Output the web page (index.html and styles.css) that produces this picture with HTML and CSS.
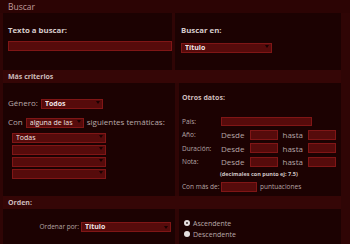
FILE: index.html
```html
<!DOCTYPE html>
<html lang="es">
<head>
    <meta charset="UTF-8">
    <title>Buscar</title>
    <link rel="stylesheet" href="styles.css">
</head>
<body>
<div class="page">

    <!-- Cabecera -->
    <div class="bar bar-top">Buscar</div>

    <div class="row row-first">
        <div class="panel panel-left">
            <label class="title">Texto a buscar:</label>
            <input type="text" class="field field-text">
        </div>
        <div class="panel panel-right">
            <label class="title">Buscar en:</label>
            <div class="sel sel-en"><select><option>Título</option></select></div>
        </div>
    </div>

    <div class="bar">Más criterios</div>

    <div class="row row-criterios">
        <div class="panel panel-left criterios">
            <div class="line">
                <span>Género:</span>
                <div class="sel sel-genero"><select><option>Todos</option></select></div>
            </div>
            <div class="line line-con">
                <span>Con</span>
                <div class="sel sel-con"><select><option>alguna de las</option></select></div>
                <span>siguientes temáticas:</span>
            </div>
            <div class="tematicas">
                <div class="sel sel-tema"><select><option>Todas</option></select></div>
                <div class="sel sel-tema"><select><option></option></select></div>
                <div class="sel sel-tema"><select><option></option></select></div>
                <div class="sel sel-tema"><select><option></option></select></div>
            </div>
        </div>
        <div class="panel panel-right otros">
            <div class="subtitle">Otros datos:</div>
            <div class="datos">
                <span>País:</span>
                <div class="cell"><input type="text" class="field field-pais"></div>
                <span>Año:</span>
                <div class="cell">Desde <input type="text" class="field field-num"> hasta <input type="text" class="field field-num"></div>
                <span>Duración:</span>
                <div class="cell">Desde <input type="text" class="field field-num"> hasta <input type="text" class="field field-num"></div>
                <span>Nota:</span>
                <div class="cell">Desde <input type="text" class="field field-num"> hasta <input type="text" class="field field-num"></div>
            </div>
            <div class="nota-info">(decimales con punto ej: 7.5)</div>
            <div class="votos">
                <span class="votos-label">Con más de:</span>
                <input type="text" class="field field-votos">
                <span>puntuaciones</span>
            </div>
        </div>
    </div>

    <div class="bar">Orden:</div>

    <div class="row row-orden">
        <div class="panel panel-left orden">
            <span>Ordenar por:</span>
            <div class="sel sel-orden"><select><option>Título</option></select></div>
        </div>
        <div class="panel panel-right sentido">
            <label class="radio"><input type="radio" name="orden" checked> Ascendente</label>
            <label class="radio"><input type="radio" name="orden"> Descendente</label>
        </div>
    </div>

</div>
</body>
</html>
```

FILE: styles.css
```css
/* Reset */
* {
    margin: 0;
    padding: 0;
    box-sizing: border-box;
}

body {
    font-family: "Open Sans", "DejaVu Sans", sans-serif;
    font-size: 8px;
    background-color: #2a0404;
    color: #c9b9b9;
    width: 350px;
    overflow: hidden;
}

/* Marco general */
.page {
    padding: 0 9px 0 3px;
    background-color: #2f0505;
}

/* Barras de seccion */
.bar {
    height: 13px;
    line-height: 13px;
    padding-left: 5px;
    font-weight: bold;
    font-size: 7px;
    color: #cdbcbc;
    background-color: #350606;
}

.bar-top {
    margin-left: -3px;
    margin-right: -9px;
    padding-left: 8px;
    font-weight: normal;
    font-size: 8.5px;
    color: #c09c9c;
    background-color: #2c0404;
}

.row {
    display: flex;
    gap: 4px;
}

.panel {
    background-color: #1c0202;
}

.panel-left {
    width: 172px;
}

.panel-right {
    flex: 1;
}

/* Primera fila */
.row-first {
    gap: 3px;
    height: 57px;
}

.row-first .panel-left {
    width: 169px;
    padding: 12px 0 0 5px;
}

.row-first .panel-right {
    padding: 12px 0 0 6px;
}

.title {
    display: block;
    font-weight: bold;
    font-size: 7.8px;
    line-height: 10px;
    margin-bottom: 4px;
    color: #d6caca;
}

/* Campos */
.field {
    display: inline-block;
    height: 10px;
    background-color: #560b0b;
    border: 1px solid #801616;
    color: #eee;
    font-size: 7px;
    outline: none;
    vertical-align: middle;
}

.field-text {
    width: 164px;
}

.sel {
    display: inline-block;
    position: relative;
    height: 10px;
    vertical-align: middle;
}

.sel select {
    appearance: none;
    -webkit-appearance: none;
    width: 100%;
    height: 10px;
    padding: 0 0 0 3px;
    background-color: #560b0b;
    border: 1px solid #801616;
    border-radius: 0;
    color: #f0e4e4;
    font-family: inherit;
    font-size: 7px;
    line-height: 8px;
    font-weight: bold;
}

.sel::after {
    content: "";
    position: absolute;
    right: 3px;
    top: 4px;
    border-left: 2px solid transparent;
    border-right: 2px solid transparent;
    border-top: 3px solid #1a0202;
}

.sel-en {
    width: 91px;
}

/* Mas criterios */
.row-criterios {
    height: 113px;
}

.criterios {
    padding: 14px 0 0 5px;
    color: #b9a9a9;
}

.line {
    display: flex;
    align-items: center;
    gap: 3px;
    height: 10px;
    font-size: 8px;
}

.line-con {
    margin-top: 9px;
}

.sel-genero {
    width: 62px;
}

.sel-con {
    width: 58px;
}

.sel-con select {
    font-weight: normal;
}

.tematicas {
    display: flex;
    flex-direction: column;
    gap: 2px;
    margin: 5px 0 0 4px;
}

.sel-tema {
    width: 94px;
}

.sel-tema select {
    font-weight: normal;
}

/* Otros datos */
.otros {
    padding: 11px 0 0 3px;
    font-size: 6.5px;
    color: #b5a5a5;
}

.subtitle {
    font-weight: bold;
    font-size: 7px;
    line-height: 8px;
    color: #cdbcbc;
}

.datos {
    display: grid;
    grid-template-columns: 39px 1fr;
    row-gap: 3.5px;
    align-items: center;
    margin-top: 14px;
}

.cell {
    display: flex;
    align-items: center;
    gap: 5px;
    height: 10px;
    font-size: 8px;
}

.field-pais {
    width: 91px;
    height: 9px;
}

.field-num {
    width: 28px;
}

.nota-info {
    margin: 3px 0 0 38px;
    font-size: 5.5px;
    font-weight: bold;
    line-height: 8px;
    color: #cfc4c4;
}

.votos {
    display: flex;
    align-items: center;
    gap: 3px;
    margin-top: 4px;
    height: 10px;
    white-space: nowrap;
}

.votos-label {
    width: 36px;
}

.field-votos {
    width: 36px;
}

/* Orden */
.row-orden {
    height: 40px;
}

.orden {
    display: flex;
    align-items: flex-start;
    justify-content: flex-end;
    gap: 2px;
    height: 40px;
    padding: 13px 4px 0 0;
    color: #b5a5a5;
    font-size: 6.5px;
    line-height: 10px;
}

.sel-orden {
    width: 90px;
}

.sentido {
    padding: 9px 0 0 5px;
    display: flex;
    flex-direction: column;
    gap: 1px;
    font-size: 7px;
    color: #b9a9a9;
}

.radio {
    display: flex;
    align-items: center;
    gap: 3px;
    height: 10px;
}

.radio input {
    appearance: none;
    -webkit-appearance: none;
    width: 6px;
    height: 6px;
    border-radius: 50%;
    background-color: #e6e0e0;
}

.radio input:checked {
    border: 2px solid #e6e0e0;
    background-color: #3a2a2a;
}
```
